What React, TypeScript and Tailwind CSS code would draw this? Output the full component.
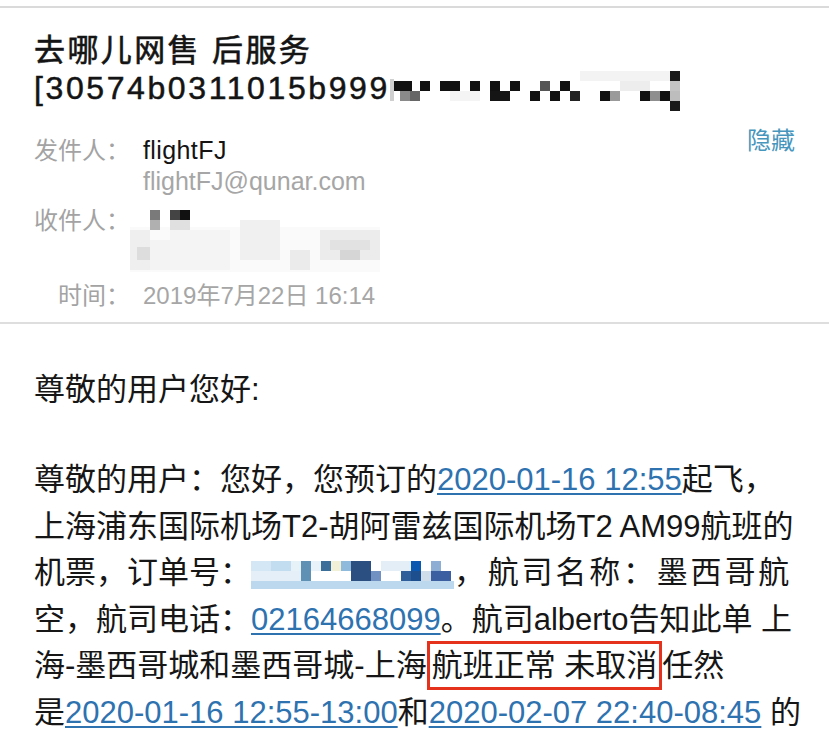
import React from "react";

const FONT = "font-['Liberation_Sans','Noto_Sans_CJK_SC',sans-serif]";

function TitleMosaic() {
  const cells: [number, number, number, number, string][] = [
    [3, 12, 19, 10, "#111"],
    [30, 12, 10, 10, "#111"],
    [50, 12, 20, 10, "#111"],
    [80, 12, 10, 10, "#111"],
    [100, 12, 10, 10, "#111"],
    [120, 12, 10, 10, "#111"],
    [150, 12, 10, 10, "#555"],
    [170, 12, 10, 10, "#111"],
    [190, 2, 90, 10, "#f3f3f3"],
    [230, 12, 30, 10, "#ededed"],
    [10, 22, 10, 10, "#8a8a8a"],
    [20, 22, 10, 10, "#666"],
    [60, 22, 30, 10, "#f4f4f4"],
    [100, 22, 20, 10, "#151515"],
    [140, 22, 10, 10, "#111"],
    [160, 22, 10, 10, "#111"],
    [180, 22, 10, 10, "#222"],
    [210, 22, 10, 10, "#111"],
    [220, 22, 10, 10, "#9a9a9a"],
    [250, 22, 10, 10, "#111"],
    [260, 22, 10, 10, "#8e8e8e"],
    [270, 22, 10, 10, "#111"],
    [280, 22, 10, 10, "#bdbdbd"],
    [280, 2, 10, 10, "#1a1a1a"],
    [280, 12, 10, 10, "#c4c4c4"],
    [280, 32, 10, 10, "#1a1a1a"],
    [0, 10, 4, 22, "#cfcfcf"],
  ];
  return (
    <svg width="292" height="44" className="inline-block align-[-14px]" viewBox="0 0 292 44">
      {cells.map(([x, y, w, h, c], i) => (
        <rect key={i} x={x} y={y} width={w} height={h} fill={c} />
      ))}
    </svg>
  );
}

function RecipientMosaic() {
  const cells: [number, number, number, number, string][] = [
    [0, 22, 250, 45, "#fafafa"],
    [0, 25, 20, 40, "#efefef"],
    [7, 42, 13, 13, "#dddddd"],
    [20, 35, 20, 30, "#f3f3f3"],
    [40, 25, 60, 40, "#f4f4f4"],
    [110, 15, 40, 40, "#f0f0f0"],
    [160, 45, 20, 20, "#ebebeb"],
    [190, 25, 60, 30, "#ececec"],
    [200, 35, 40, 10, "#e2e2e2"],
    [210, 45, 20, 10, "#d6d6d6"],
    [20, 5, 10, 10, "#7a7a7a"],
    [20, 15, 10, 10, "#b0b0b0"],
    [40, 5, 10, 10, "#444"],
    [50, 5, 10, 10, "#111"],
    [40, 15, 20, 10, "#e0e0e0"],
  ];
  return (
    <svg width="250" height="70" viewBox="0 0 250 70" className="block ml-[-13px]">
      {cells.map(([x, y, w, h, c], i) => (
        <rect key={i} x={x} y={y} width={w} height={h} fill={c} />
      ))}
    </svg>
  );
}

function OrderMosaic() {
  const cells: [number, number, number, number, string][] = [
    [0, 4, 20, 10, "#d3e7f5"],
    [20, 4, 20, 10, "#c2ddf0"],
    [40, 4, 10, 10, "#e6f1f8"],
    [50, 4, 10, 20, "#5f91b4"],
    [60, 4, 10, 10, "#e9f2f8"],
    [70, 4, 10, 10, "#3b6f9a"],
    [80, 4, 10, 10, "#f2f0d6"],
    [90, 4, 10, 10, "#8fbadb"],
    [100, 4, 20, 20, "#2c4f82"],
    [120, 14, 10, 10, "#7191c2"],
    [130, 4, 30, 10, "#e3eef7"],
    [150, 14, 10, 10, "#2f5f9a"],
    [160, 4, 10, 10, "#0b58b1"],
    [160, 14, 10, 10, "#1d4f8e"],
    [170, 14, 10, 10, "#cfdcea"],
    [180, 14, 20, 10, "#3b5fa0"],
    [180, 4, 10, 10, "#8eaed3"],
    [0, 14, 50, 10, "#e4eff8"],
    [0, 24, 203, 8, "#bcd8ee"],
  ];
  return (
    <svg width="203" height="34" viewBox="0 0 203 34" className="inline-block align-[-8px]">
      {cells.map(([x, y, w, h, c], i) => (
        <rect key={i} x={x} y={y} width={w} height={h} fill={c} />
      ))}
    </svg>
  );
}

const LINK = "text-[#2e72b0] underline decoration-[1.5px] underline-offset-[3px]";
const LINE = "whitespace-nowrap";

export default function App() {
  return (
    <div className={`w-[829px] h-[744px] overflow-hidden bg-white ${FONT}`}>
      <div className="h-[6px]" />
      <div className="border-t-2 border-[#dadada]" />
      <div className="px-[34px] pt-[24px]">
        <div className="text-[31px] leading-[37px] text-[#141414] tracking-[2.4px] whitespace-nowrap [-webkit-text-stroke:0.6px_#141414]">
          去哪儿网售 后服务
        </div>
        <div className="h-[37px] text-[32px] leading-[37px] text-[#141414] tracking-[2.6px] whitespace-nowrap [-webkit-text-stroke:0.5px_#141414]">
          [30574b0311015b999
          <TitleMosaic />
        </div>

        <div className="mt-[29px] grid grid-cols-[96px_1fr_auto] gap-x-[13px]">
          <div className="text-right text-[24px] leading-[31px] text-[#a3a3a3]">发件人：</div>
          <div>
            <div className="text-[25px] leading-[31px] text-[#141414] tracking-[0.4px]">flightFJ</div>
            <div className="text-[25px] leading-[31px] text-[#a6a6a6]">flightFJ@qunar.com</div>
          </div>
          <div className="mt-[-10px] text-[24px] leading-[31px] text-[#4796bd]">隐藏</div>

          <div className="mt-[8px] text-right text-[24px] leading-[31px] text-[#a3a3a3]">收件人：</div>
          <div className="mt-[8px] col-span-2">
            <RecipientMosaic />
          </div>

          <div className="mt-[5px] text-right text-[24px] leading-[31px] text-[#a3a3a3]">时间：</div>
          <div className="mt-[5px] col-span-2 text-[24px] leading-[31px] text-[#a6a6a6]">
            2019年7月22日 16:14
          </div>
        </div>
      </div>
      <div className="mt-[11px] border-t-2 border-[#dedede]" />

      <div className="pl-[34px] pt-[43px] text-[31px] leading-[46.5px] text-[#161616]">
        <div>尊敬的用户您好:</div>
        <div className="mt-[43.5px]">
          <div className={LINE}>
            尊敬的用户：您好，您预订的<span className={LINK}>2020-01-16 12:55</span>起飞，
          </div>
          <div className={LINE}>上海浦东国际机场T2-胡阿雷兹国际机场T2 AM99航班的</div>
          <div className={LINE}>
            机票，订单号：<OrderMosaic />
            <span className="tracking-[2.8px]">，航司名称：墨西哥航</span>
          </div>
          <div className={LINE}>
            空，航司电话：<span className={LINK}>02164668099</span>。航司alberto告知此单 上
          </div>
          <div className={LINE}>
            海-墨西哥城和墨西哥城-上海
            <span className="border-[3px] border-[#e5321d] py-[4px] px-[2px]">航班正常 未取消</span>任然
          </div>
          <div className={LINE}>
            是<span className={LINK}>2020-01-16 12:55-13:00</span>和
            <span className={LINK}>2020-02-07 22:40-08:45</span> 的
          </div>
        </div>
      </div>
    </div>
  );
}
